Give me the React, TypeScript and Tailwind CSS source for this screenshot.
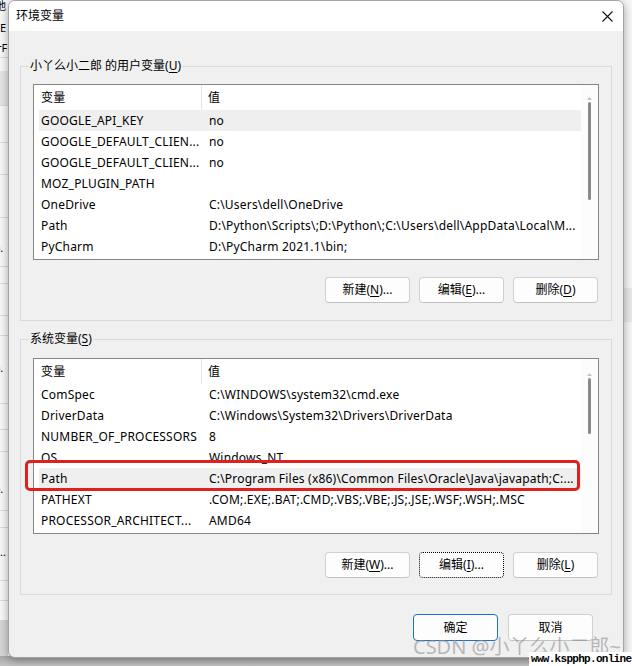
import React from "react";

type R = { n: string; v: string; hl?: boolean };

const userVars: R[] = [
  { n: "GOOGLE_API_KEY", v: "no", hl: true },
  { n: "GOOGLE_DEFAULT_CLIEN...", v: "no" },
  { n: "GOOGLE_DEFAULT_CLIEN...", v: "no" },
  { n: "MOZ_PLUGIN_PATH", v: "" },
  { n: "OneDrive", v: "C:\\Users\\dell\\OneDrive" },
  { n: "Path", v: "D:\\Python\\Scripts\\;D:\\Python\\;C:\\Users\\dell\\AppData\\Local\\M..." },
  { n: "PyCharm", v: "D:\\PyCharm 2021.1\\bin;" },
];

const sysVars: R[] = [
  { n: "ComSpec", v: "C:\\WINDOWS\\system32\\cmd.exe" },
  { n: "DriverData", v: "C:\\Windows\\System32\\Drivers\\DriverData" },
  { n: "NUMBER_OF_PROCESSORS", v: "8" },
  { n: "OS", v: "Windows_NT" },
  { n: "Path", v: "C:\\Program Files (x86)\\Common Files\\Oracle\\Java\\javapath;C:...", hl: true },
  { n: "PATHEXT", v: ".COM;.EXE;.BAT;.CMD;.VBS;.VBE;.JS;.JSE;.WSF;.WSH;.MSC" },
  { n: "PROCESSOR_ARCHITECT...", v: "AMD64" },
];

function Row({ r }: { r: R }) {
  return (
    <div className={`ml-[5px] flex h-[21px] items-center ${r.hl ? "bg-[#efefef]" : ""}`}>
      <div className="w-[163px] shrink-0 overflow-hidden whitespace-nowrap pl-[2px]">{r.n}</div>
      <div className="min-w-0 flex-1 overflow-hidden whitespace-nowrap pl-[7px]">{r.v}</div>
    </div>
  );
}

function ListView({ rows, thumbTop, thumbH }: { rows: R[]; thumbTop: string; thumbH: string }) {
  return (
    <div className="flex h-[176px] border border-[#858585] bg-white text-[12px] tracking-[0.2px] text-black">
      <div className="flex min-w-0 flex-1 flex-col">
        <div className="flex h-[25px] shrink-0 items-center">
          <div className="flex h-full w-[168px] shrink-0 items-center border-r border-[#e5e5e5] pl-[7px]">变量</div>
          <div className="pl-[6px]">值</div>
        </div>
        {rows.map((r, i) => (
          <Row key={i} r={r} />
        ))}
      </div>
      <div className={`flex w-[17px] shrink-0 flex-col items-center bg-[#fcfcfc] ${thumbTop}`}>
        <svg width="5" height="3" viewBox="0 0 5 3" className="mb-[2px]">
          <path d="M0 3 L2.5 0 L5 3 Z" fill="#c4c4c4" />
        </svg>
        <div className={`w-[3px] rounded-full bg-[#8a8a8a] ${thumbH}`} />
      </div>
    </div>
  );
}

function Btn({ children, variant }: { children: React.ReactNode; variant?: "focus" | "default" }) {
  const border =
    variant === "focus"
      ? "border border-dotted border-black"
      : variant === "default"
      ? "border-[1.5px] border-[#1f6fc9]"
      : "border border-[#d0d0d0] border-b-[#c2c2c2]";
  return (
    <div className={`flex w-[85px] items-center justify-center rounded-[4px] bg-[#fdfdfd] text-[12px] text-black ${border}`}>
      {children}
    </div>
  );
}

function U({ c }: { c: string }) {
  return <span className="underline underline-offset-[2px]">{c}</span>;
}

function Group({ legend, children, top }: { legend: React.ReactNode; children: React.ReactNode; top: string }) {
  return (
    <div className={`relative border border-[#dadada] px-[12px] ${top}`}>
      <div className="absolute -top-[10px] left-[8px] bg-[#f0f0f0] px-[1px] text-[12px] leading-[18px] text-black">
        {legend}
      </div>
      {children}
    </div>
  );
}

export default function App() {
  const stripLines = [57, 105, 142, 174, 217, 266, 283, 315, 335, 403, 429, 451, 510, 527, 580, 600];
  return (
    <div className="relative h-[666px] w-[632px] overflow-hidden bg-[#f7f7f7] [font-family:'Noto_Sans','Noto_Sans_CJK_SC',sans-serif]">
      {/* background window strip on the left */}
      <div className="absolute left-0 top-0 h-[666px] w-[8px] overflow-hidden bg-[#f9f9f9] text-[11px] leading-[12px] text-black">
        <div className="absolute left-0 top-[71px] h-[34px] w-[8px] bg-[#e6e6e6]" />
        {stripLines.map((y) => (
          <div key={y} className="absolute left-0 h-px w-[8px] bg-[#dcdcdc]" style={{ top: y }} />
        ))}
        <div className="absolute -left-[5px] top-0">地</div>
        <div className="absolute left-0 top-[22px]">E</div>
        <div className="absolute -left-[3px] top-[42px]">rF</div>
        <div className="absolute -left-[3px] top-[242px]">).</div>
        <div className="absolute -left-[3px] top-[362px]">).</div>
        <div className="absolute -left-[3px] top-[483px]">).</div>
        <div className="absolute left-0 top-[546px]">..</div>
        <div className="absolute left-0 top-[620px] h-[46px] w-[8px] bg-[#d6d6d6]" />
      </div>
      {/* right strip */}
      <div className="absolute right-0 top-[288px] h-[34px] w-[8px] bg-[#e9e9e9]" />
      {/* bottom shadow area */}
      <div className="absolute bottom-0 left-0 h-[10px] w-[632px] bg-gradient-to-b from-[#a9a9a9] to-[#c4c4c4]" />

      {/* dialog */}
      <div className="absolute left-[8px] top-0 flex h-[658px] w-[616px] flex-col overflow-hidden rounded-[7px] border border-[#a3a3a3] bg-[#f0f0f0] shadow-[0_2px_10px_rgba(0,0,0,0.35)]">
        <div className="flex h-[30px] shrink-0 items-center justify-between bg-white pl-[7px] pr-[10px] text-[12px] text-black">
          <span>环境变量</span>
          <svg width="11" height="11" viewBox="0 0 11 11">
            <path d="M0.5 0.5 L10.5 10.5 M10.5 0.5 L0.5 10.5" stroke="#111" strokeWidth="1.1" />
          </svg>
        </div>
        <div className="flex flex-col px-[11px]">
          <Group
            top="mt-[35px] pt-[17px] pb-[17px]"
            legend={
              <>
                小丫么小二郎 的用户变量(<U c="U" />)
              </>
            }
          >
            <ListView rows={userVars} thumbTop="pt-[12px]" thumbH="h-[98px]" />
            <div className="mt-[17px] flex h-[26px] justify-end gap-[9px] pr-[1px]">
              <Btn>
                新建(<U c="N" />)...
              </Btn>
              <Btn>
                编辑(<U c="E" />)...
              </Btn>
              <Btn>
                删除(<U c="D" />)
              </Btn>
            </div>
          </Group>
          <Group
            top="mt-[18px] pt-[18px] pb-[16px]"
            legend={
              <>
                系统变量(<U c="S" />)
              </>
            }
          >
            <div className="relative">
              <ListView rows={sysVars} thumbTop="pt-[14px]" thumbH="h-[56px]" />
              <div className="absolute left-[-8px] top-[102px] h-[31px] w-[555px] rounded-[5px] border-[3px] border-[#e0201c]" />
            </div>
            <div className="mt-[18px] flex h-[26px] justify-end gap-[9px] pr-[1px]">
              <Btn>
                新建(<U c="W" />)...
              </Btn>
              <Btn variant="focus">
                编辑(<U c="I" />)...
              </Btn>
              <Btn>
                删除(<U c="L" />)
              </Btn>
            </div>
          </Group>
          <div className="mt-[19px] flex h-[27px] justify-end gap-[10px] pr-[19px]">
            <Btn variant="default">确定</Btn>
            <Btn>取消</Btn>
          </div>
        </div>
      </div>

      {/* watermarks */}
      <div className="pointer-events-none absolute left-[413px] top-[634px] whitespace-nowrap text-[20px] leading-[26px] text-[#8f8f8f]/60">
        CSDN @小丫么小二郎~
      </div>
      <div className="absolute bottom-0 right-0 h-[14px] w-[103px] bg-white pl-[2px] text-[11px] font-bold leading-[14px] tracking-[-0.7px] text-black [font-family:'Liberation_Mono',monospace]">
        www.kspphp.online
      </div>
    </div>
  );
}
